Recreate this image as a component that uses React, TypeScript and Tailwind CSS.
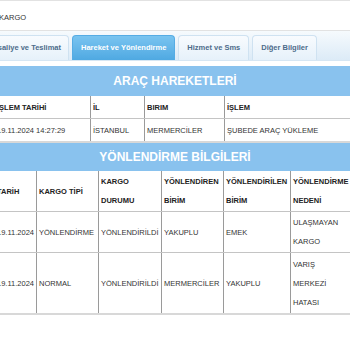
import React from "react";

const Tab = ({ label, active }: { label: string; active?: boolean }) => (
  <div
    className={
      active
        ? "h-[25px] px-[8px] flex items-center rounded-t-[4px] border border-b-0 border-[#55ace4] bg-linear-to-b from-[#79c4f0] to-[#4fa9e2] text-white font-bold text-[7.5px] whitespace-nowrap"
        : "h-[25px] px-[8px] flex items-center rounded-t-[4px] border border-b-0 border-[#cfe2f1] bg-linear-to-b from-[#f8fbfe] to-[#e6f1fa] text-[#4d6c8a] font-bold text-[7.5px] whitespace-nowrap"
    }
  >
    {label}
  </div>
);

const HCell = ({ children, last }: { children: React.ReactNode; last?: boolean }) => (
  <div
    className={
      "flex items-center px-[2px] font-bold text-[#222] leading-[19px] " +
      (last ? "" : "border-r border-[#9a9a9a]")
    }
  >
    <div>{children}</div>
  </div>
);

const DCell = ({ children, last }: { children: React.ReactNode; last?: boolean }) => (
  <div
    className={
      "flex items-center px-[2px] text-[#333] leading-[19px] " +
      (last ? "" : "border-r border-[#9a9a9a]")
    }
  >
    <div>{children}</div>
  </div>
);

export default function App() {
  return (
    <div className="w-[350px] h-[350px] overflow-hidden bg-white font-['Liberation_Sans',Arial,sans-serif] text-[7.5px]">
      <div className="w-[360px] ml-[-5px]">
        {/* top */}
        <div className="h-[31px] border-t border-[#e2e2e2] border-b border-[#cdcdcd] flex items-center pt-[4px] pl-[4px] text-[#333]">
          KARGO
        </div>
        {/* tabs */}
        <div className="h-[30px] bg-linear-to-b from-[#f6fafd] to-[#dcebf7] border-b border-[#d6e6f3] flex items-end gap-[3px]">
          <div className="w-[74px] flex justify-end">
            <div className="h-[25px] pr-[7px] flex items-center rounded-tr-[4px] border border-b-0 border-l-0 border-[#cfe2f1] bg-linear-to-b from-[#f8fbfe] to-[#e6f1fa] text-[#4d6c8a] font-bold whitespace-nowrap">
              saliye ve Teslimat
            </div>
          </div>
          <Tab label="Hareket ve Yönlendirme" active />
          <Tab label="Hizmet ve Sms" />
          <Tab label="Diğer Bilgiler" />
        </div>
        <div className="h-[5px]" />
        {/* Araç hareketleri */}
        <div className="h-[30px] bg-[#89c2ee] flex items-center justify-center text-white font-bold text-[12px]">
          ARAÇ HAREKETLERİ
        </div>
        <div className="grid grid-cols-[96px_54px_80px_1fr] h-[23px] border-b border-[#c4c4c4]">
          <HCell>İŞLEM TARİHİ</HCell>
          <HCell>İL</HCell>
          <HCell>BIRIM</HCell>
          <HCell last>İŞLEM</HCell>
        </div>
        <div className="grid grid-cols-[96px_54px_80px_1fr] h-[24px] border-b-2 border-[#d8d8d8]">
          <DCell>19.11.2024 14:27:29</DCell>
          <DCell>İSTANBUL</DCell>
          <DCell>MERMERCİLER</DCell>
          <DCell last>ŞUBEDE ARAÇ YÜKLEME</DCell>
        </div>
        {/* Yönlendirme bilgileri */}
        <div className="h-[28px] bg-[#89c2ee] flex items-center justify-center text-white font-bold text-[12px]">
          YÖNLENDİRME BİLGİLERİ
        </div>
        <div className="grid grid-cols-[42px_62px_63px_62px_67px_1fr] h-[41px] border-b border-[#c4c4c4]">
          <HCell>TARİH</HCell>
          <HCell>KARGO TİPİ</HCell>
          <HCell>
            KARGO
            <br />
            DURUMU
          </HCell>
          <HCell>
            YÖNLENDİREN
            <br />
            BİRİM
          </HCell>
          <HCell>
            YÖNLENDİRİLEN
            <br />
            BİRİM
          </HCell>
          <HCell last>
            <span className="whitespace-nowrap">YÖNLENDİRME</span>
            <br />
            NEDENİ
          </HCell>
        </div>
        <div className="grid grid-cols-[42px_62px_63px_62px_67px_1fr] h-[41px] border-b border-[#c4c4c4]">
          <DCell>19.11.2024</DCell>
          <DCell>YÖNLENDİRME</DCell>
          <DCell>YÖNLENDİRİLDİ</DCell>
          <DCell>YAKUPLU</DCell>
          <DCell>EMEK</DCell>
          <DCell last>
            ULAŞMAYAN
            <br />
            KARGO
          </DCell>
        </div>
        <div className="grid grid-cols-[42px_62px_63px_62px_67px_1fr] h-[62px] border-b-2 border-[#d8d8d8]">
          <DCell>19.11.2024</DCell>
          <DCell>NORMAL</DCell>
          <DCell>YÖNLENDİRİLDİ</DCell>
          <DCell>MERMERCİLER</DCell>
          <DCell>YAKUPLU</DCell>
          <DCell last>
            VARIŞ
            <br />
            MERKEZİ
            <br />
            HATASI
          </DCell>
        </div>
      </div>
    </div>
  );
}
